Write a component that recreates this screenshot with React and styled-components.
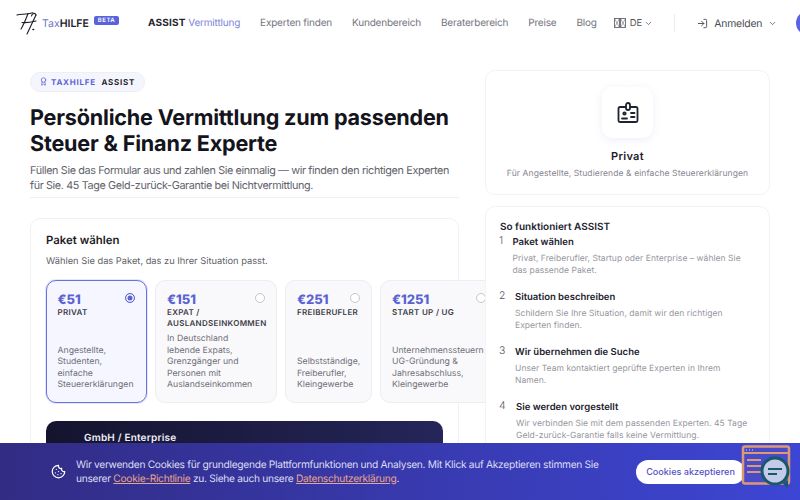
import styled, { createGlobalStyle } from "styled-components";
import { ChevronDown, LogIn, Cookie, Award } from "lucide-react";

const packages = [
  { price: "€51", name: "PRIVAT", desc: "Angestellte, Studenten, einfache Steuererklärungen", width: 101, active: true },
  { price: "€151", name: "EXPAT / AUSLANDSEINKOMMEN", desc: "In Deutschland lebende Expats, Grenzgänger und Personen mit Auslandseinkommen", width: 122 },
  { price: "€251", name: "FREIBERUFLER", desc: "Selbstständige, Freiberufler, Kleingewerbe", width: 87 },
  { price: "€1251", name: "START UP / UG", desc: "Unternehmenssteuern UG-Gründung & Jahresabschluss, Kleingewerbe", width: 118 },
];

const steps = [
  { title: "Paket wählen", indent: 12.5, desc: "Privat, Freiberufler, Startup oder Enterprise – wählen Sie das passende Paket." },
  { title: "Situation beschreiben", indent: 15, desc: "Schildern Sie Ihre Situation, damit wir den richtigen Experten finden." },
  { title: "Wir übernehmen die Suche", indent: 15, desc: "Unser Team kontaktiert geprüfte Experten in Ihrem Namen." },
  { title: "Sie werden vorgestellt", indent: 16, desc: "Wir verbinden Sie mit dem passenden Experten. 45 Tage Geld-zurück-Garantie falls keine Vermittlung." },
];

export default function App() {
  return (
    <>
      <Global />
      <Header>
        <Logo>
          <svg width="21" height="23" viewBox="0 0 21 23" fill="none" stroke="#1c1c28" strokeWidth="1.1" strokeLinecap="round">
            <path d="M1 3C5 1.5 9 3 17 .8" />
            <path d="M12 1.5C10 7 8 12 5 17" />
            <path d="M20 3C17 9 14 16 11 22" />
            <path d="M20 3C19 .5 16 1 15.5 4" />
            <path d="M6 10.5C10 11 16 10 20 9" />
            <path d="M17 17.5h.6" strokeWidth="1.6" />
          </svg>
          <LogoText>
            Tax<b>HILFE</b>
          </LogoText>
          <Beta>BETA</Beta>
        </Logo>
        <Nav>
          <NavLink>
            <b>ASSIST</b> <em>Vermittlung</em>
          </NavLink>
          <NavLink>Experten finden</NavLink>
          <NavLink>Kundenbereich</NavLink>
          <NavLink>Beraterbereich</NavLink>
          <NavLink>Preise</NavLink>
          <NavLink>Blog</NavLink>
        </Nav>
        <Lang>
          <svg width="12" height="10" viewBox="0 0 12 10" fill="none" stroke="#55555f" strokeWidth="0.8">
            <rect x="0.5" y="0.5" width="5" height="9" />
            <rect x="6.5" y="0.5" width="5" height="9" />
            <path d="M0.5 0.5l5 9M5.5 0.5l-5 9M6.5 0.5l5 9M11.5 0.5l-5 9" strokeWidth="0.5" />
          </svg>
          DE
          <ChevronDown size={9} />
        </Lang>
        <Divider />
        <Login>
          <LogIn size={11} />
          Anmelden
          <ChevronDown size={9} />
        </Login>
        <Avatar />
      </Header>

      <Main>
        <Left>
          <Badge>
            <Award size={9} color="#5b63d3" />
            <span>TAXHILFE</span> ASSIST
          </Badge>
          <Title>
            Persönliche Vermittlung zum passenden
            <br />
            Steuer &amp; Finanz Experte
          </Title>
          <Lead>
            Füllen Sie das Formular aus und zahlen Sie einmalig — wir finden den richtigen Experten
            <br />
            für Sie. 45 Tage Geld-zurück-Garantie bei Nichtvermittlung.
          </Lead>
          <FormCard>
            <CardTitle>Paket wählen</CardTitle>
            <CardSub>Wählen Sie das Paket, das zu Ihrer Situation passt.</CardSub>
            <PackageRow>
              {packages.map((p) => (
                <Package key={p.price} $width={p.width} $active={p.active}>
                  <Radio $active={p.active} />
                  <Price>{p.price}</Price>
                  <PackageName>{p.name}</PackageName>
                  <PackageDesc>{p.desc}</PackageDesc>
                </Package>
              ))}
            </PackageRow>
            <Enterprise>GmbH / Enterprise</Enterprise>
          </FormCard>
        </Left>

        <Right>
          <ProfileCard>
            <IconTile>
              <svg width="24" height="24" viewBox="0 0 24 24" fill="none" stroke="#1f2230" strokeWidth="1.8" strokeLinecap="round" strokeLinejoin="round">
                <path d="M9.5 6H4a1.5 1.5 0 0 0-1.5 1.5v12A1.5 1.5 0 0 0 4 21h16a1.5 1.5 0 0 0 1.5-1.5v-12A1.5 1.5 0 0 0 20 6h-5.5" />
                <rect x="10" y="2" width="4" height="7" rx="2" />
                <circle cx="8.5" cy="12.5" r="1.2" />
                <path d="M6 17.5h5" />
                <path d="M15 12h3.5M15 16h3.5" />
              </svg>
            </IconTile>
            <ProfileName>Privat</ProfileName>
            <ProfileDesc>Für Angestellte, Studierende &amp; einfache Steuererklärungen</ProfileDesc>
          </ProfileCard>
          <StepsCard>
            <StepsTitle>So funktioniert ASSIST</StepsTitle>
            {steps.map((s, i) => (
              <Step key={s.title}>
                <StepNumber>{i + 1}</StepNumber>
                <StepBody $indent={s.indent}>
                  <StepTitle>{s.title}</StepTitle>
                  <StepDesc>{s.desc}</StepDesc>
                </StepBody>
              </Step>
            ))}
          </StepsCard>
        </Right>
      </Main>

      <CookieBar>
        <Cookie size={15} color="#fff" />
        <CookieText>
          Wir verwenden Cookies für grundlegende Plattformfunktionen und Analysen. Mit Klick auf Akzeptieren stimmen Sie
          <br />
          unserer <a>Cookie-Richtlinie</a> zu. Siehe auch unsere <a>Datenschutzerklärung</a>.
        </CookieText>
        <AcceptButton>Cookies akzeptieren</AcceptButton>
        <Widget>
          <svg width="50" height="46" viewBox="0 0 50 46" fill="none">
            <rect x="2" y="1.5" width="46" height="37" rx="2" fill="#4a4bc9" stroke="#dc9a72" strokeWidth="2.5" />
            <path d="M2 8h46" stroke="#dc9a72" strokeWidth="2" />
            <path d="M5 5h1M8 5h1M11 5h1" stroke="#f3d6c2" strokeWidth="1.2" />
            <path d="M6 15h14M6 21h14M6 27h14" stroke="#dc9a72" strokeWidth="2" />
            <circle cx="34" cy="26" r="13" fill="#c3cbe9" stroke="#17586b" strokeWidth="3" />
            <path d="M27 24h14M27 29h9" stroke="#17586b" strokeWidth="2" />
            <path d="M41 38l6 5v-7z" fill="#17586b" />
          </svg>
        </Widget>
      </CookieBar>
    </>
  );
}

const Global = createGlobalStyle`
  html, body {
    margin: 0;
    height: 100%;
    overflow: hidden;
    background: #fff;
    font-family: Inter, "Noto Sans", sans-serif;
    color: #1c1c28;
    text-rendering: geometricPrecision;
  }
  * {
    box-sizing: border-box;
  }
`;

const Header = styled.header`
  display: flex;
  align-items: center;
  height: 46px;
  padding-left: 16px;
  white-space: nowrap;
`;
const Logo = styled.div`
  flex: none;
  display: flex;
  align-items: center;
  width: 132px;
`;
const LogoText = styled.span`
  margin-left: 5px;
  font-size: 10.5px;
  color: #6f76c9;
  b {
    font-weight: 600;
    color: #22222e;
  }
`;
const Beta = styled.span`
  margin: -5px 0 0 5px;
  padding: 1px 4px;
  border-radius: 2px;
  background: #5a63dc;
  color: #fff;
  font-size: 6px;
  font-weight: 600;
  letter-spacing: 0.5px;
`;
const Nav = styled.nav`
  flex: none;
  display: flex;
  gap: 20px;
`;
const NavLink = styled.a`
  font-size: 10px;
  letter-spacing: -0.2px;
  color: #74747e;
  b {
    font-weight: 700;
    color: #25252f;
    letter-spacing: 0.2px;
  }
  em {
    font-style: normal;
    color: #7d84d6;
  }
`;
const Lang = styled.div`
  flex: none;
  display: flex;
  align-items: center;
  gap: 4px;
  margin-left: 17px;
  font-size: 9.5px;
  color: #55555f;
  svg:last-child {
    margin-left: -2px;
  }
`;
const Divider = styled.div`
  flex: none;
  width: 1px;
  height: 18px;
  margin: 0 22px 0 21px;
  background: #ececf0;
`;
const Login = styled.div`
  flex: none;
  display: flex;
  align-items: center;
  gap: 6px;
  font-size: 10.4px;
  letter-spacing: -0.2px;
  color: #4b4b55;
`;
const Avatar = styled.div`
  flex: none;
  width: 24px;
  height: 24px;
  margin-left: 19px;
  border-radius: 50%;
  background: #5a63e0;
`;

const Main = styled.main`
  display: grid;
  grid-template-columns: 429px 285px;
  gap: 26px;
  padding: 24px 30px 0;
`;
const Left = styled.div`
  min-width: 0;
`;
const Badge = styled.div`
  display: inline-flex;
  align-items: center;
  gap: 3px;
  height: 20px;
  padding: 0 9px 0 8px;
  border-radius: 10px;
  border: 1px solid #eeeef6;
  background: #f5f6fd;
  font-size: 8px;
  font-weight: 700;
  letter-spacing: 0.75px;
  color: #25252f;
  white-space: pre;
  span {
    color: #5b63d3;
  }
`;
const Title = styled.h1`
  margin: 13px 0 0;
  font-size: 21.6px;
  line-height: 26px;
  font-weight: 700;
  letter-spacing: -0.2px;
  color: #14141c;
  white-space: nowrap;
`;
const Lead = styled.p`
  margin: 6px 0 0;
  padding-bottom: 4px;
  border-bottom: 1px solid #f0f0f3;
  font-size: 10.8px;
  line-height: 15px;
  letter-spacing: -0.36px;
  color: #62626c;
  white-space: nowrap;
`;
const FormCard = styled.section`
  margin-top: 20px;
  height: 400px;
  padding: 14px 15px;
  border: 1px solid #f1f1f4;
  border-radius: 10px;
`;
const CardTitle = styled.h2`
  margin: 0;
  font-size: 11.4px;
  line-height: 15px;
  font-weight: 600;
  color: #1d1d28;
`;
const CardSub = styled.p`
  margin: 7px 0 0;
  font-size: 9.3px;
  line-height: 14px;
  color: #5f5f69;
`;
const PackageRow = styled.div`
  display: flex;
  gap: 8px;
  margin-top: 11px;
`;
const Package = styled.div`
  position: relative;
  flex: none;
  display: flex;
  flex-direction: column;
  width: ${(p) => p.$width}px;
  height: 123px;
  padding: 12px 10px 10px ${(p) => (p.$active ? 10.5 : 11)}px;
  border-radius: 10px;
  border: ${(p) => (p.$active ? "1.5px solid #6a72dc" : "1px solid #eeeef1")};
  background: ${(p) => (p.$active ? "#f5f6ff" : "#f9f9fb")};
  box-shadow: ${(p) => (p.$active ? "0 0 0 1px rgba(106, 114, 220, 0.18)" : "none")};
`;
const Radio = styled.span`
  position: absolute;
  top: 12px;
  right: ${(p) => (p.$active ? 11.5 : 11)}px;
  width: 10px;
  height: 10px;
  border-radius: 50%;
  border: 1px solid ${(p) => (p.$active ? "#5b63d3" : "#c6c6cc")};
  background: ${(p) => (p.$active ? "#5b63d3" : "#fff")};
  box-shadow: ${(p) => (p.$active ? "inset 0 0 0 1.5px #f5f6ff" : "none")};
`;
const Price = styled.div`
  font-size: 13px;
  line-height: 15px;
  font-weight: 800;
  color: #5b63d3;
`;
const PackageName = styled.div`
  margin-top: -1px;
  font-size: 8px;
  line-height: 11px;
  font-weight: 600;
  letter-spacing: 0.3px;
  color: #3c3c48;
`;
const PackageDesc = styled.div`
  margin-top: auto;
  max-width: 92px;
  font-size: 8.7px;
  line-height: 11.5px;
  color: #6f6f79;
`;
const Enterprise = styled.div`
  margin-top: 18px;
  height: 120px;
  padding: 11px 38px;
  border-radius: 10px;
  background: linear-gradient(90deg, #14142e, #25255a);
  color: #f1f1f5;
  font-size: 10px;
  font-weight: 600;
  letter-spacing: 0.2px;
`;

const Right = styled.aside`
  position: relative;
  display: flex;
  flex-direction: column;
  gap: 11px;
`;
const ProfileCard = styled.section`
  display: flex;
  flex-direction: column;
  align-items: center;
  height: 125px;
  padding-top: 16px;
  border: 1px solid #f3f3f6;
  border-radius: 10px;
  background: #fff;
`;
const IconTile = styled.div`
  display: flex;
  align-items: center;
  justify-content: center;
  width: 51px;
  height: 51px;
  border-radius: 10px;
  background: #fff;
  box-shadow: 0 2px 8px rgba(90, 100, 200, 0.1);
`;
const ProfileName = styled.div`
  margin-top: 11px;
  font-size: 11px;
  line-height: 15px;
  font-weight: 600;
  letter-spacing: 0.3px;
  color: #1d1d28;
`;
const ProfileDesc = styled.div`
  margin-top: 4px;
  font-size: 8.5px;
  line-height: 13px;
  letter-spacing: 0.1px;
  color: #85858e;
`;
const StepsCard = styled.section`
  height: 300px;
  padding: 13px 14px;
  border: 1px solid #f3f3f6;
  border-radius: 10px;
  background: #fff;
`;
const StepsTitle = styled.h3`
  margin: 0;
  font-size: 10px;
  line-height: 14px;
  font-weight: 600;
  color: #22222e;
`;
const Step = styled.div`
  position: relative;
  height: 55px;
`;
const StepNumber = styled.span`
  position: absolute;
  top: 1px;
  left: -1px;
  font-size: 10.5px;
  line-height: 12px;
  font-weight: 300;
  color: #55555f;
`;
const StepBody = styled.div`
  padding: 2px 7px 0 ${(p) => p.$indent}px;
`;
const StepTitle = styled.div`
  font-size: 9.5px;
  line-height: 13px;
  font-weight: 600;
  color: #22222e;
`;
const StepDesc = styled.div`
  margin-top: 4px;
  font-size: 8.5px;
  line-height: 12px;
  letter-spacing: 0.05px;
  color: #96969e;
`;

const CookieBar = styled.div`
  position: fixed;
  left: 0;
  right: 0;
  bottom: 0;
  display: flex;
  align-items: center;
  height: 57px;
  padding-left: 51px;
  background: linear-gradient(90deg, #322c84, #3d46d4);
`;
const CookieText = styled.p`
  flex: none;
  width: 530px;
  margin: 0 0 0 10px;
  font-size: 10.2px;
  line-height: 14px;
  letter-spacing: -0.29px;
  color: #dcdcf2;
  white-space: nowrap;
  a {
    color: #e8a48c;
    text-decoration: underline;
  }
`;
const AcceptButton = styled.button`
  flex: none;
  margin-left: 30px;
  width: 109px;
  height: 24px;
  padding: 0;
  border: none;
  border-radius: 12px;
  background: #fff;
  color: #5550c4;
  font: 500 9.1px Inter, sans-serif;
`;
const Widget = styled.div`
  position: absolute;
  right: 9px;
  top: 2px;
  width: 50px;
  height: 46px;
`;
